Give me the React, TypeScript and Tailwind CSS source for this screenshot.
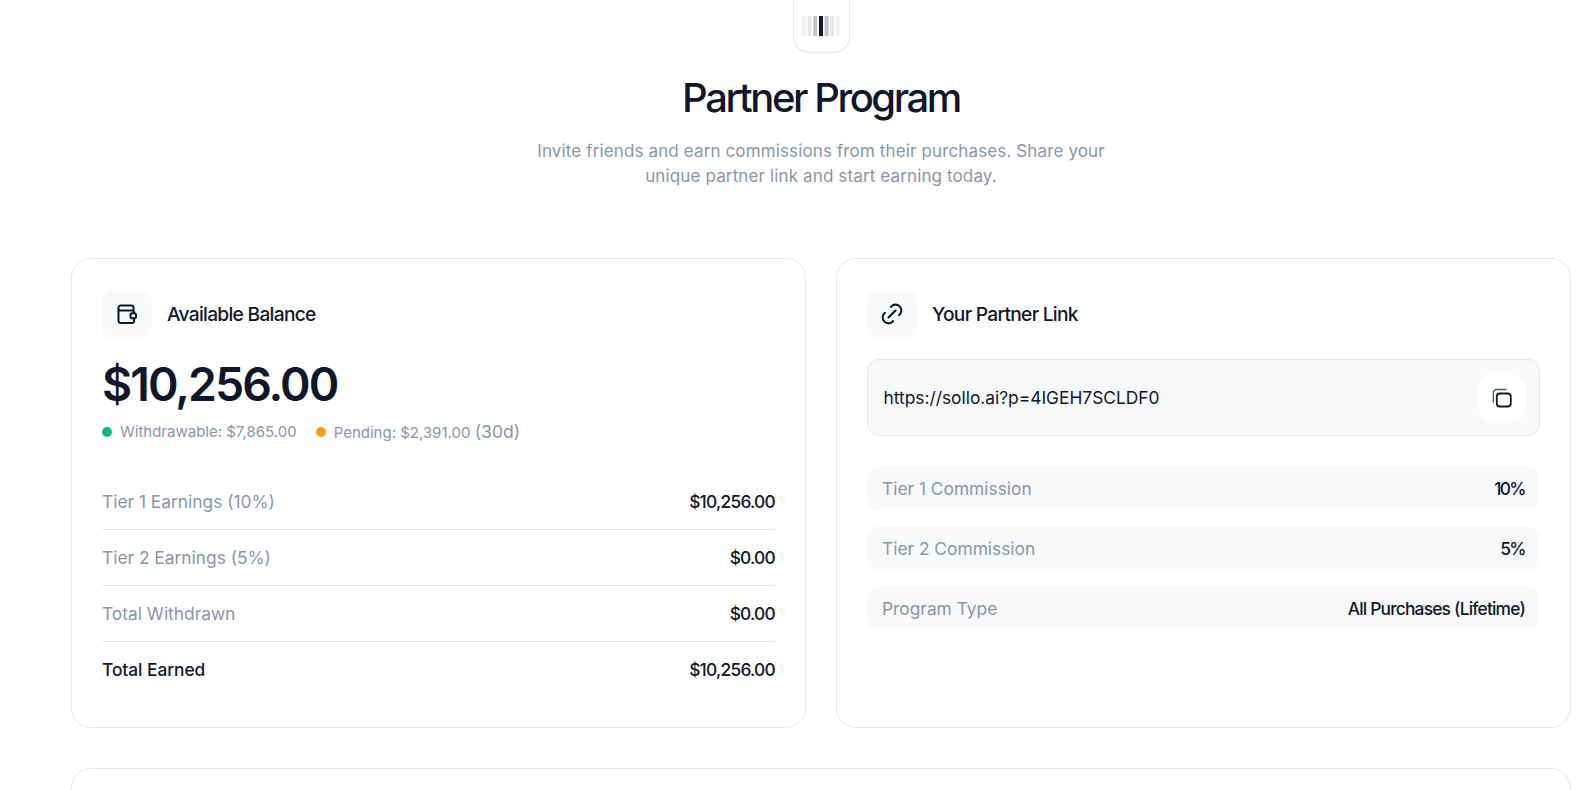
import { TbLink } from "react-icons/tb";

const Row = ({ l, v, bold, last }: { l: string; v: string; bold?: boolean; last?: boolean }) => (
  <div className={`flex items-center justify-between h-[56px] ${last ? "" : "border-b border-[#e2e8f0]"}`}>
    <span className={bold ? "text-[17.35px] font-medium text-[#0f172a] tracking-[-0.05px]" : "text-[17.35px] text-[#8896ab]"}>{l}</span>
    <span className="text-[17.35px] font-medium text-[#0f172a] tracking-[-0.75px]">{v}</span>
  </div>
);

const Tier = ({ l, v, tight }: { l: string; v: string; tight?: boolean }) => (
  <div className="flex items-center justify-between h-[45px] rounded-[12px] bg-[#f8f9fb] px-[15px] pt-[1px]">
    <span className="text-[17.35px] text-[#8896ab]">{l}</span>
    <span className={`text-[17.35px] font-medium text-[#0f172a] ${tight ? "tracking-[-1.6px]" : "tracking-[-0.8px]"}`}>{v}</span>
  </div>
);

const WalletGlyph = () => (
  <svg width="20" height="20" viewBox="0 0 20 20" fill="none" stroke="#0f172a" strokeWidth="2" strokeLinecap="round" strokeLinejoin="round">
    <path d="M16.5 6V3.5A2 2 0 0 0 14.5 1.5H3.5A2 2 0 0 0 1.5 3.5V16.5A2.5 2.5 0 0 0 4 19H15A2 2 0 0 0 17 17V14.5" />
    <path d="M1.5 5A1.5 1.5 0 0 0 3.5 6.5H15A2 2 0 0 1 17 8.5V9" />
    <rect x="13.5" y="9.2" width="5.5" height="5" rx="1.8" />
  </svg>
);

const CopyGlyph = () => (
  <svg width="20" height="20" viewBox="0 0 20 20" fill="none" strokeLinecap="round" strokeLinejoin="round">
    <rect x="4.8" y="5.5" width="14" height="13" rx="3" stroke="#0f172a" strokeWidth="1.8" />
    <path d="M1.4 14V5A3.5 3.5 0 0 1 4.9 1.5H14" stroke="#4b5563" strokeWidth="1.4" />
  </svg>
);

export default function App() {
  return (
    <div className="h-[790px] overflow-hidden bg-white pl-[71px] pr-[16px] font-['Inter',sans-serif]">
      <div className="flex flex-col items-center">
        <div className="flex h-[53px] w-[57px] items-center justify-center rounded-b-[16px] border border-t-0 border-[#e2e8f0]">
          <svg width="38" height="20" viewBox="0 0 38 20">
            <rect x="0" width="4" height="20" fill="#f1f1f2" />
            <rect x="5.6" width="4" height="20" fill="#e6e6e7" />
            <rect x="11.2" width="4" height="20" fill="#c4c6c9" />
            <rect x="17" width="4" height="20" fill="#111827" />
            <rect x="22.6" width="4" height="20" fill="#c4c6c9" />
            <rect x="28.3" width="4" height="20" fill="#e6e6e7" />
            <rect x="33.9" width="4" height="20" fill="#f1f1f2" />
          </svg>
        </div>
        <h1 className="mt-[21px] text-[40px] leading-[48px] font-medium tracking-[-2.45px] text-[#0f172a]">Partner Program</h1>
        <p className="mt-[17px] w-[600px] text-center text-[17px] leading-[25px] tracking-[0.13px] text-[#8896ab]">
          Invite friends and earn commissions from their purchases. Share your unique partner link and start earning today.
        </p>
      </div>
      <div className="mt-[69px] grid grid-cols-2 gap-[30px]">
        <div className="h-[470px] rounded-[20px] border border-[#e2e8f0] px-[30px] pt-[30px]">
          <div className="flex items-center gap-[15px]">
            <div className="flex h-[50px] w-[50px] items-center justify-center rounded-[12px] bg-[#f8f9fb]">
              <WalletGlyph />
            </div>
            <span className="text-[19.2px] font-medium tracking-[-0.72px] text-[#0f172a]">Available Balance</span>
          </div>
          <div className="mt-[16px] text-[46.4px] leading-[58px] font-semibold tracking-[-1.95px] text-[#0f172a]">$10,256.00</div>
          <div className="mt-[6px] flex items-center gap-[19px] text-[15px] text-[#8896ab]">
            <span className="flex items-center gap-[8px]"><span className="h-[10px] w-[10px] rounded-full bg-[#10b981]" />Withdrawable: $7,865.00</span>
            <span className="flex items-center gap-[8px]"><span className="h-[10px] w-[10px] rounded-full bg-[#f59e0b]" /><span>Pending: $2,391.00 <span className="text-[17.6px]">(30d)</span></span></span>
          </div>
          <div className="mt-[29px]">
            <Row l="Tier 1 Earnings (10%)" v="$10,256.00" />
            <Row l="Tier 2 Earnings (5%)" v="$0.00" />
            <Row l="Total Withdrawn" v="$0.00" />
            <Row l="Total Earned" v="$10,256.00" bold last />
          </div>
        </div>
        <div className="h-[470px] rounded-[20px] border border-[#e2e8f0] px-[30px] pt-[30px]">
          <div className="flex items-center gap-[15px]">
            <div className="flex h-[50px] w-[50px] items-center justify-center rounded-[12px] bg-[#f8f9fb]">
              <TbLink size={28} strokeWidth={1.8} className="text-[#0f172a]" />
            </div>
            <span className="text-[19.2px] font-medium tracking-[-0.72px] text-[#0f172a]">Your Partner Link</span>
          </div>
          <div className="mt-[20px] flex h-[77px] items-center justify-between rounded-[12px] border border-[#e2e8f0] bg-[#f8f9fb] pl-[15.5px] pr-[15px]">
            <span className="pt-[2px] text-[17.35px] text-[#0f172a]">https://sollo.ai?p=4IGEH7SCLDF0</span>
            <button className="flex h-[45px] w-[45px] items-center justify-center rounded-[10px] bg-white"><CopyGlyph /></button>
          </div>
          <div className="mt-[30px] flex flex-col gap-[15px]">
            <Tier l="Tier 1 Commission" v="10%" tight />
            <Tier l="Tier 2 Commission" v="5%" tight />
            <Tier l="Program Type" v="All Purchases (Lifetime)" />
          </div>
        </div>
      </div>
      <div className="mt-[40px] h-[100px] rounded-[20px] border border-[#e2e8f0]" />
    </div>
  );
}
